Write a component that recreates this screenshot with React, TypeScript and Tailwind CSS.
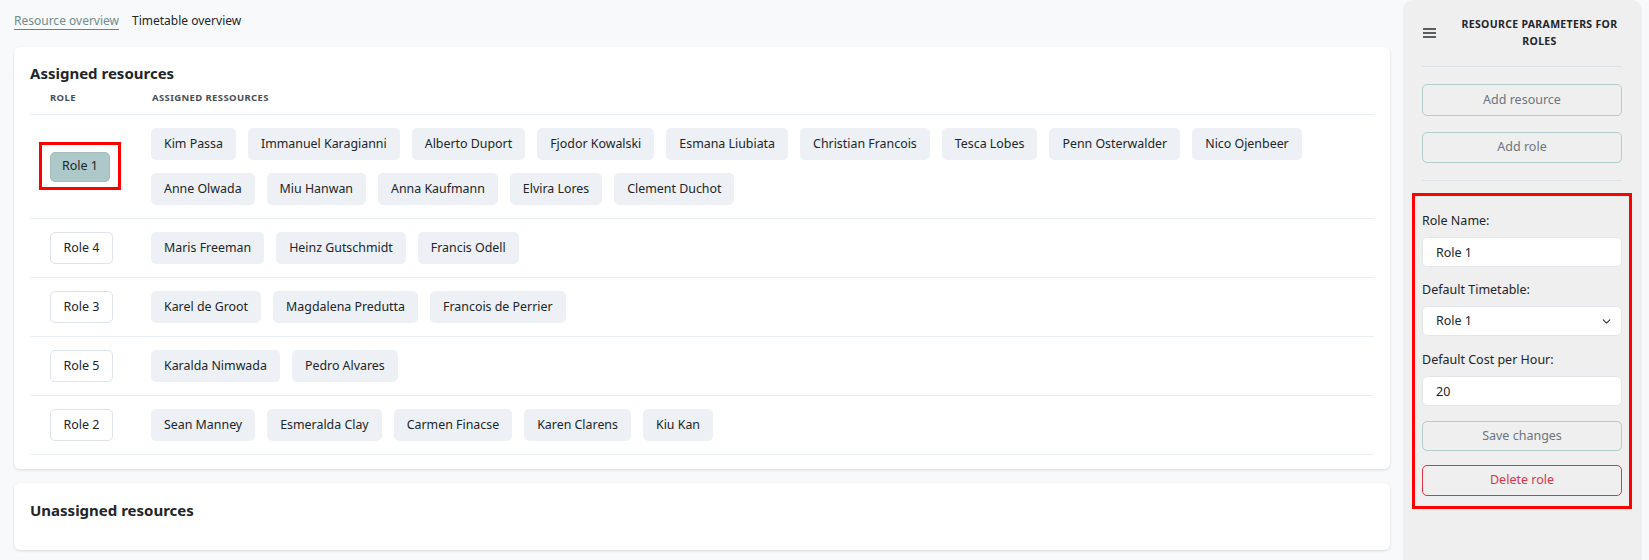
import { ChevronDown } from 'lucide-react'

type RoleRow = {
  role: string
  people: string[]
  selected?: boolean
}

const ROWS: RoleRow[] = [
  {
    role: 'Role 1',
    selected: true,
    people: [
      'Kim Passa', 'Immanuel Karagianni', 'Alberto Duport', 'Fjodor Kowalski', 'Esmana Liubiata',
      'Christian Francois', 'Tesca Lobes', 'Penn Osterwalder', 'Nico Ojenbeer',
      'Anne Olwada', 'Miu Hanwan', 'Anna Kaufmann', 'Elvira Lores', 'Clement Duchot',
    ],
  },
  { role: 'Role 4', people: ['Maris Freeman', 'Heinz Gutschmidt', 'Francis Odell'] },
  { role: 'Role 3', people: ['Karel de Groot', 'Magdalena Predutta', 'Francois de Perrier'] },
  { role: 'Role 5', people: ['Karalda Nimwada', 'Pedro Alvares'] },
  { role: 'Role 2', people: ['Sean Manney', 'Esmeralda Clay', 'Carmen Finacse', 'Karen Clarens', 'Kiu Kan'] },
]

function RoleButton({ label, selected }: { label: string; selected?: boolean }) {
  if (selected) {
    return (
      <div className="relative inline-block">
        <button className="w-[60px] h-[30px] rounded-[5px] bg-[#adc8c8] border border-[#a2bdbd] text-[12.5px] text-[#212529]">
          {label}
        </button>
        <div className="absolute -left-[11px] -right-[11px] -top-[10px] -bottom-[8px] border-[3px] border-[#ff0000] pointer-events-none" />
      </div>
    )
  }
  return (
    <button className="w-[63px] h-[32px] rounded-[5px] bg-white border border-[#dde3e9] text-[12.5px] text-[#212529]">
      {label}
    </button>
  )
}

function Chip({ name }: { name: string }) {
  return (
    <span className="h-[32px] px-[13px] rounded-[5px] bg-[#edf1f5] text-[12.4px] text-[#212529] flex items-center whitespace-nowrap">
      {name}
    </span>
  )
}

function Field({ label, children, className = '' }: { label: string; children: React.ReactNode; className?: string }) {
  return (
    <div className={className}>
      <div className="text-[12.5px] leading-5 text-[#212529] mb-[6px]">{label}</div>
      {children}
    </div>
  )
}

export default function App() {
  return (
    <div
      className="flex w-full h-[560px] bg-[#f8f9fa] pr-[7px] overflow-hidden text-[#212529]"
      style={{ fontFamily: '"Noto Sans", "Open Sans", sans-serif' }}
    >
      {/* main */}
      <div className="flex-1 pl-[14px] pr-[13px]">
        <div className="flex gap-[13px] pt-[12px] text-[12px] leading-[17px]">
          <span className="text-[#6f8c8c] border-b border-[#5b8a84]">Resource overview</span>
          <span className="text-[#212529]">Timetable overview</span>
        </div>

        <div className="mt-[17px] bg-white rounded-[6px] shadow-[0_1px_3px_rgba(0,0,0,0.13)] px-[16px] pt-[14px] pb-[14px]">
          <h2 className="text-[15px] leading-6 font-bold">Assigned resources</h2>
          <div className="flex pt-[6px] pb-[9px] border-b border-[#e9eef3] text-[9.5px] leading-[14px] font-bold tracking-[0.04em] text-[#495057]">
            <div className="w-[121px] pl-[20px]">ROLE</div>
            <div className="flex-1 pl-[1px]">ASSIGNED RESSOURCES</div>
          </div>
          {ROWS.map((row) => (
            <div key={row.role} className="flex items-center py-[13px] border-b border-[#e9eef3]">
              <div className="w-[121px] pl-[20px] shrink-0">
                <RoleButton label={row.role} selected={row.selected} />
              </div>
              <div className="flex-1 flex flex-wrap gap-x-3 gap-y-[13px]">
                {row.people.map((p) => (
                  <Chip key={p} name={p} />
                ))}
              </div>
            </div>
          ))}
        </div>

        <div className="mt-[14px] bg-white rounded-[6px] shadow-[0_1px_3px_rgba(0,0,0,0.13)] px-[16px] pt-[15px] pb-[28px]">
          <h2 className="text-[15px] leading-6 font-bold">Unassigned resources</h2>
        </div>
      </div>

      {/* sidebar */}
      <aside className="w-[239px] shrink-0 bg-[#efefef] rounded-t-[10px] pl-[19px] pr-[20px]">
        <div className="flex items-center pt-[16px] pb-[16px]">
          <svg width="14" height="10" viewBox="0 0 14 10" className="ml-[1px] shrink-0">
            <path d="M0 1h13M0 5h13M0 9h13" stroke="#2b2f33" strokeWidth="1.4" />
          </svg>
          <div className="flex-1 pl-[20px] text-center text-[10.5px] leading-[17px] font-bold tracking-[0.03em] text-[#212529]">
            RESOURCE PARAMETERS FOR ROLES
          </div>
        </div>
        <div className="border-t border-[#dde3e8]" />
        <button className="mt-[17px] w-full h-[32px] rounded-[5px] border border-[#b3cccc] text-[12.5px] text-[#6c757d]">
          Add resource
        </button>
        <button className="mt-[16px] w-full h-[31px] rounded-[5px] border border-[#b3cccc] text-[12.5px] text-[#6c757d]">
          Add role
        </button>
        <div className="mt-[17px] border-t border-[#dde3e8]" />

        <div className="mt-[12px] -mx-[10px] border-[3px] border-[#ff0000] px-[7px] pt-[15px] pb-[10px]">
          <Field label="Role Name:">
            <input
              readOnly
              defaultValue="Role 1"
              className="w-full h-[30px] bg-white border border-[#e3e7eb] rounded-[5px] px-[13px] text-[12.5px] outline-none"
            />
          </Field>
          <Field label="Default Timetable:" className="mt-[13px]">
            <div className="w-full h-[30px] bg-white border border-[#e3e7eb] rounded-[5px] pl-[13px] pr-[8px] text-[12.5px] flex items-center justify-between">
              <span>Role 1</span>
              <ChevronDown size={13} strokeWidth={2.2} className="text-[#343a40]" />
            </div>
          </Field>
          <Field label="Default Cost per Hour:" className="mt-[14px]">
            <input
              readOnly
              defaultValue="20"
              className="w-full h-[30px] bg-white border border-[#e3e7eb] rounded-[5px] px-[13px] text-[12.5px] outline-none"
            />
          </Field>
          <button className="mt-[15px] w-full h-[30px] rounded-[5px] border border-[#b3cccc] text-[12.5px] text-[#6c757d]">
            Save changes
          </button>
          <button className="mt-[14px] w-full h-[31px] rounded-[5px] border border-[#dc3545] text-[12.5px] text-[#dc3545]">
            Delete role
          </button>
        </div>
      </aside>
    </div>
  )
}
